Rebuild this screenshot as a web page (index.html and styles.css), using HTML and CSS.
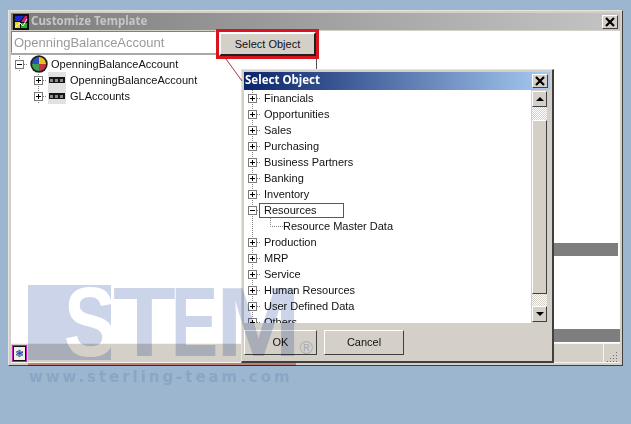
FILE: index.html
```html
<!DOCTYPE html>
<html lang="en">
<head>
<meta charset="utf-8">
<title>Customize Template</title>
<link rel="stylesheet" href="styles.css">
</head>
<body>
<svg class="defs" width="0" height="0">
  <symbol id="plus" viewBox="0 0 16 16"><path d="M7.5 0V16" class="dot"/><path d="M12 8.5H16" class="dot"/><rect x="3.5" y="4.5" width="8" height="8" class="box"/><path d="M5 8.5H10M7.5 6V11" class="mark"/></symbol>
  <symbol id="minus" viewBox="0 0 16 16"><path d="M7.5 0V16" class="dot"/><path d="M12 8.5H16" class="dot"/><rect x="3.5" y="4.5" width="8" height="8" class="box"/><path d="M5 8.5H10" class="mark"/></symbol>
  <symbol id="table" viewBox="0 0 18 16"><rect width="18" height="16" fill="#e2e2e2"/><rect x="1" y="5" width="16" height="6" fill="#161616"/><path d="M2 7H5V10H2ZM7 7H10V10H7ZM12 7H15V10H12Z" fill="#8c8c8c"/></symbol>
  <symbol id="close" viewBox="0 0 10 10"><path d="M1 1L9 9M9 1L1 9" stroke="#000" stroke-width="2.2" fill="none"/></symbol>
</svg>

<section class="window">
  <header class="titlebar">
    <svg class="app-icon" width="16" height="16" viewBox="0 0 16 16"><rect width="16" height="16" fill="#111"/><path d="M2 2H11L7 7H2Z" fill="#1a2ad0"/><path d="M8 8L12 2H14V8Z" fill="#d02070"/><path d="M2 8H7V14H2Z" fill="#e8d820"/><path d="M8 9H14V14H8Z" fill="#30b030"/><path d="M2 13L7 9L10 12L14 5" stroke="#f4f4f4" fill="none"/></svg>
    <span class="title-text">Customize Template</span>
    <span class="close-btn"><svg width="10" height="10"><use href="#close"/></svg></span>
  </header>
  <div class="main">
    <div class="left">
      <div class="input-row">
        <div class="name-input">OpenningBalanceAccount</div>
        <div class="highlight"><button class="select-btn">Select Object</button></div>
      </div>
      <div class="tree-main">
        <div class="row root">
          <svg class="tw" width="16" height="16"><use href="#minus"/></svg>
          <svg class="globe" width="18" height="18" viewBox="0 0 18 18"><circle cx="9" cy="9" r="8.7" fill="#202020"/><path d="M9 2A7 7 0 0 1 16 9H9Z" fill="#e8c020"/><path d="M16 9A7 7 0 0 1 9 16V9Z" fill="#d03040"/><path d="M9 16A7 7 0 0 1 2 9H9Z" fill="#40a050"/><path d="M2 9A7 7 0 0 1 9 2V9Z" fill="#2850c0"/></svg>
          <span class="label">OpenningBalanceAccount</span>
        </div>
        <div class="row child">
          <svg class="tw" width="16" height="16"><use href="#plus"/></svg>
          <svg class="tbl" width="18" height="16"><use href="#table"/></svg>
          <span class="label">OpenningBalanceAccount</span>
        </div>
        <div class="row child">
          <svg class="tw" width="16" height="16"><use href="#plus"/></svg>
          <svg class="tbl" width="18" height="16"><use href="#table"/></svg>
          <span class="label">GLAccounts</span>
        </div>
      </div>
    </div>
    <div class="right">
      <div class="pane pane-a"></div>
      <div class="bar bar-a"></div>
      <div class="pane pane-b"></div>
      <div class="bar"></div>
    </div>
  </div>
  <footer class="statusbar">
    <span class="status-icon">&#10051;</span>
    <span class="status-fill"></span>
    <svg class="grip" width="11" height="11" viewBox="0 0 11 11"><path d="M9 1h1v1H9zM6 4h1v1H6zM9 4h1v1H9zM3 7h1v1H3zM6 7h1v1H6zM9 7h1v1H9zM0 10h1v1H0zM3 10h1v1H3zM6 10h1v1H6zM9 10h1v1H9z" fill="#707070"/></svg>
  </footer>
</section>

<section class="dialog">
  <header class="dlg-title">
    <span class="dlg-title-text">Select Object</span>
    <span class="close-btn small"><svg width="10" height="10"><use href="#close"/></svg></span>
  </header>
  <div class="dlg-body">
    <div class="tree-dlg">
      <div class="row"><svg class="tw" width="16" height="16"><use href="#plus"/></svg><span class="label">Financials</span></div>
      <div class="row"><svg class="tw" width="16" height="16"><use href="#plus"/></svg><span class="label">Opportunities</span></div>
      <div class="row"><svg class="tw" width="16" height="16"><use href="#plus"/></svg><span class="label">Sales</span></div>
      <div class="row"><svg class="tw" width="16" height="16"><use href="#plus"/></svg><span class="label">Purchasing</span></div>
      <div class="row"><svg class="tw" width="16" height="16"><use href="#plus"/></svg><span class="label">Business Partners</span></div>
      <div class="row"><svg class="tw" width="16" height="16"><use href="#plus"/></svg><span class="label">Banking</span></div>
      <div class="row"><svg class="tw" width="16" height="16"><use href="#plus"/></svg><span class="label">Inventory</span></div>
      <div class="row"><svg class="tw tw-sel" width="16" height="16"><use href="#minus"/></svg><span class="label selected">Resources</span></div>
      <div class="row"><svg width="38" height="16" viewBox="0 0 38 16"><path d="M7.5 0V16M25.5 0V8.5H38" class="dot"/></svg><span class="label">Resource Master Data</span></div>
      <div class="row"><svg class="tw" width="16" height="16"><use href="#plus"/></svg><span class="label">Production</span></div>
      <div class="row"><svg class="tw" width="16" height="16"><use href="#plus"/></svg><span class="label">MRP</span></div>
      <div class="row"><svg class="tw" width="16" height="16"><use href="#plus"/></svg><span class="label">Service</span></div>
      <div class="row"><svg class="tw" width="16" height="16"><use href="#plus"/></svg><span class="label">Human Resources</span></div>
      <div class="row"><svg class="tw" width="16" height="16"><use href="#plus"/></svg><span class="label">User Defined Data</span></div>
      <div class="row"><svg class="tw" width="16" height="16"><use href="#plus"/></svg><span class="label">Others</span></div>
    </div>
    <div class="scrollbar">
      <div class="sb-btn"><span class="arrow up"></span></div>
      <div class="sb-track t1"></div>
      <div class="sb-thumb"></div>
      <div class="sb-track t2"></div>
      <div class="sb-btn"><span class="arrow down"></span></div>
    </div>
  </div>
  <footer class="dlg-foot">
    <button class="btn ok">OK</button>
    <button class="btn cancel">Cancel</button>
  </footer>
</section>

<svg class="callout" width="631" height="424" viewBox="0 0 631 424"><path d="M226 59L242 81" stroke="#b03040" fill="none"/></svg>

<div class="watermark">
  <div class="wm-logo">
    <span class="wm-s"><span class="wm-glyph g-s">S</span></span>
    <span class="wm-cell c-t"><span class="wm-glyph g-t">T</span></span>
    <span class="wm-cell c-e"><span class="wm-glyph g-e">E</span></span>
    <span class="wm-cell c-m"><span class="wm-glyph g-m">M</span></span>
    <span class="wm-r">&reg;</span>
  </div>
  <div class="wm-line"></div>
  <div class="wm-url">www.sterling-team.com</div>
</div>
</body>
</html>
```

FILE: styles.css
```css
* { box-sizing: border-box; }
html, body { margin: 0; padding: 0; }
body {
  position: relative;
  width: 631px;
  height: 424px;
  overflow: hidden;
  background: #9cb6cf;
  font-family: "Liberation Sans", Arial, sans-serif;
  font-size: 11px;
  color: #111;
}
.defs { position: absolute; }
.dot { fill: none; stroke: #808080; stroke-dasharray: 1 1; }
.box { fill: #fff; stroke: #7a7a7a; }
.mark { fill: none; stroke: #000; }

.window {
  position: absolute;
  left: 8px;
  top: 10px;
  width: 615px;
  height: 356px;
  display: flex;
  flex-direction: column;
  padding: 2px;
  background: #d4d0c8;
  border: 1px solid;
  border-color: #e6e4de #404040 #404040 #e6e4de;
}
.titlebar {
  height: 17px;
  flex: none;
  display: flex;
  align-items: center;
  padding-left: 2px;
  background: linear-gradient(90deg, #7c7c7c, #c4c4c4);
  color: #c6c6c6;
}
.app-icon { flex: none; margin-right: 2px; }
.title-text {
  flex: 1;
  font-family: "Noto Sans", sans-serif;
  font-weight: 700;
  font-size: 11.5px;
  line-height: 15px;
  margin-top: -2px;
}
.close-btn {
  flex: none;
  width: 16px;
  height: 14px;
  margin-right: 2px;
  display: flex;
  align-items: center;
  justify-content: center;
  background: #d4d0c8;
  border: 1px solid;
  border-color: #fff #404040 #404040 #fff;
}
.main {
  flex: 1;
  min-height: 0;
  display: flex;
  margin-top: 1px;
  background: #fff;
}
.left {
  width: 306px;
  flex: none;
  display: flex;
  flex-direction: column;
  border-right: 1px solid #505050;
}
.input-row { height: 22px; flex: none; display: flex; }
.name-input {
  width: 205px;
  flex: none;
  padding: 3px 0 0 2px;
  font-size: 13px;
  line-height: 16px;
  color: #9a9a9a;
  background: #fff;
  border: 1px solid;
  border-color: #808080 #fff #fff #808080;
}
.highlight {
  position: relative;
  z-index: 1;
  flex: none;
  width: 103px;
  height: 30px;
  margin: -2px 0 0 0;
  border: 3px solid #d8141c;
}
.select-btn {
  display: block;
  width: 97px;
  height: 24px;
  margin: 0;
  padding: 0;
  font: 11px "Liberation Sans", Arial, sans-serif;
  color: #111;
  background: #d4d0c8;
  border: 2px solid;
  border-color: #fff #202020 #202020 #fff;
}
.tree-main {
  flex: 1;
  min-height: 0;
  padding: 1px 0 0 1px;
  background: #fff;
  border-top: 2px solid #a8a8a8;
}
.row {
  height: 16px;
  display: flex;
  align-items: center;
  flex: none;
  white-space: nowrap;
}
.tw { flex: none; display: block; }
.root .globe { flex: none; margin: 0 3px 0 2px; }
.child { padding-left: 19px; }
.child .tbl { flex: none; margin: 0 4px 0 1px; }
.label { line-height: 14px; }
.right { flex: 1; display: flex; flex-direction: column; background: #fff; }
.pane { background: #fff; }
.pane-a { height: 212px; }
.pane-b { height: 73px; }
.bar { height: 13px; background: #7e7e7e; }
.bar-a { margin-right: 2px; }
.statusbar {
  height: 20px;
  flex: none;
  display: flex;
  align-items: center;
  padding-left: 1px;
  background: #d4d0c8;
  border-top: 1px solid #f4f4f0;
  border-bottom: 1px solid #f4f4f0;
}
.status-icon {
  flex: none;
  width: 15px;
  height: 17px;
  display: flex;
  align-items: center;
  justify-content: center;
  font-family: "DejaVu Sans", sans-serif;
  font-size: 10px;
  color: #1a3a9a;
  background: #f0f0e0;
  border: 2px solid #101010;
  outline: 1px solid #c020c0;
  outline-offset: -1px;
}
.status-fill { flex: 1; align-self: stretch; border-right: 1px solid #f4f4f0; margin-right: 3px; }
.grip { flex: none; margin: 7px 2px 0 0; align-self: flex-start; }

.dialog {
  position: absolute;
  left: 241px;
  top: 69px;
  width: 313px;
  height: 294px;
  display: flex;
  flex-direction: column;
  padding: 2px 2px 0;
  background: #d4d0c8;
  border: 1px solid;
  border-color: #e6e4de #404040 #404040 #e6e4de;
  border-width: 1px 2px 2px 1px;
}
.dlg-title {
  height: 18px;
  flex: none;
  display: flex;
  align-items: center;
  justify-content: space-between;
  padding-left: 1px;
  background: linear-gradient(90deg, #0a246a, #a6caf0);
  color: #fff;
}
.dlg-title-text {
  font-family: "Noto Sans", sans-serif;
  font-weight: 700;
  font-size: 11.5px;
  line-height: 15px;
  margin-top: -3px;
}
.dlg-body { height: 233px; flex: none; display: flex; }
.tree-dlg {
  flex: 1;
  min-width: 0;
  padding-left: 1px;
  overflow: hidden;
  background: #fff;
}
.tree-dlg .tw { margin-right: 3px; }
.tree-dlg .tw-sel { margin-right: 0; }
.selected {
  width: 85px;
  height: 15px;
  margin: 1px 0 0 -2px;
  padding: 0 0 0 4px;
  line-height: 13px;
  border: 1px solid #c02838;
}
.scrollbar {
  width: 20px;
  flex: none;
  padding: 1px 3px 1px 1px;
  display: flex;
  flex-direction: column;
  background: #d4d0c8;
  border-left: 1px solid #fff;
}
.sb-btn {
  height: 16px;
  flex: none;
  display: flex;
  align-items: center;
  justify-content: center;
  background: #d4d0c8;
  border: 1px solid;
  border-color: #fff #404040 #404040 #fff;
}
.arrow { width: 0; height: 0; border-left: 4px solid transparent; border-right: 4px solid transparent; }
.arrow.up { border-bottom: 4px solid #000; }
.arrow.down { border-top: 4px solid #000; }
.sb-track {
  flex: none;
  background: repeating-conic-gradient(#fff 0 25%, #d4d0c8 0 50%) 0 0 / 2px 2px;
}
.t1 { height: 13px; }
.t2 { height: 12px; }
.sb-thumb {
  flex: 1;
  background: #d4d0c8;
  border: 1px solid;
  border-color: #fff #404040 #404040 #fff;
}
.dlg-foot {
  flex: 1;
  display: flex;
  gap: 7px;
  padding-top: 7px;
  align-items: flex-start;
}
.btn {
  height: 25px;
  margin: 0;
  padding: 0 0 2px;
  font: 11px "Liberation Sans", Arial, sans-serif;
  color: #111;
  background: #d4d0c8;
  border: 1px solid;
  border-color: #fff #404040 #404040 #fff;
}
.ok { width: 73px; }
.cancel { width: 80px; }

.callout { position: absolute; left: 0; top: 0; pointer-events: none; }

.watermark {
  position: absolute;
  inset: 0;
  pointer-events: none;
  mix-blend-mode: multiply;
}
.wm-logo {
  position: absolute;
  left: 28px;
  top: 285px;
  height: 75px;
  width: 285px;
  font-family: "Liberation Sans", Arial, sans-serif;
  font-weight: 700;
  font-size: 98px;
  line-height: 75px;
  color: #cbd4e9;
  display: flex;
  overflow: hidden;
}
.wm-glyph { display: block; transform-origin: 0 50%; }
.wm-s {
  width: 83px;
  flex: none;
  padding-left: 36px;
  color: #fff;
  background: #cbd4e9;
}
.g-s { transform: scaleX(0.8); }
.wm-cell { flex: none; }
.c-t { width: 64px; margin-left: 2px; }
.g-t { transform: scaleX(1.05); }
.c-e { width: 45px; margin-left: 0; }
.g-e { transform: scaleX(0.72); margin-left: -6px; }
.c-m { width: 75px; }
.g-m { transform: scaleX(1.04); margin-left: -6px; }
.wm-r {
  position: absolute;
  right: 0;
  top: 53px;
  font-size: 18px;
  line-height: 20px;
  font-weight: 400;
}
.wm-line {
  position: absolute;
  left: 28px;
  top: 363px;
  width: 268px;
  height: 3px;
  background: #e89a9a;
}
.wm-url {
  position: absolute;
  left: 29px;
  top: 367px;
  font-family: "DejaVu Sans", sans-serif;
  font-size: 15px;
  line-height: 20px;
  letter-spacing: 2.95px;
  font-weight: 700;
  color: #e2e8f4;
  white-space: nowrap;
}
```
